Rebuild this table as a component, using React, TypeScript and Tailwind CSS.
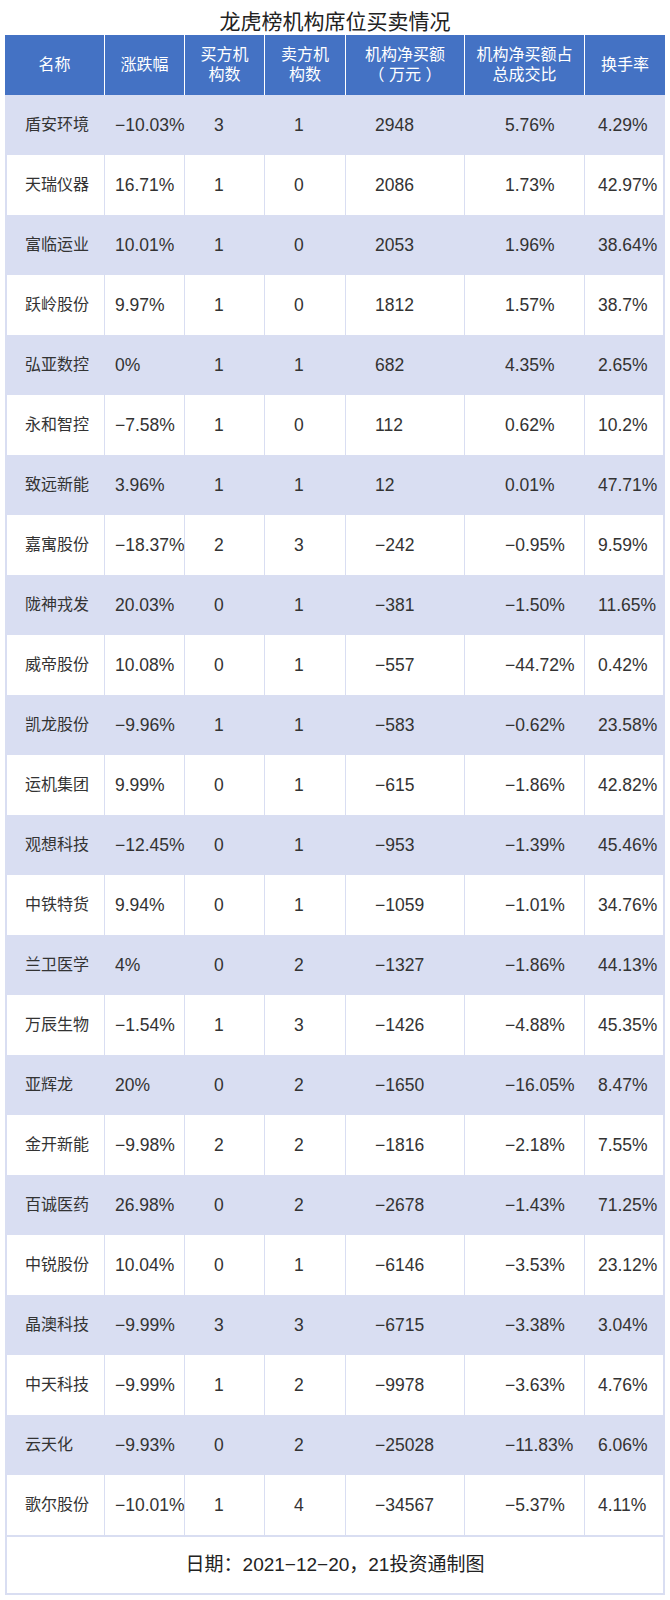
import React from 'react';

type Row = [string, string, string, string, string, string, string];

// 名称, 涨跌幅, 买方机构数, 卖方机构数, 机构净买额, 占比, 换手率
const rows: Row[] = [
  ['盾安环境', '−10.03%', '3', '1', '2948', '5.76%', '4.29%'],
  ['天瑞仪器', '16.71%', '1', '0', '2086', '1.73%', '42.97%'],
  ['富临运业', '10.01%', '1', '0', '2053', '1.96%', '38.64%'],
  ['跃岭股份', '9.97%', '1', '0', '1812', '1.57%', '38.7%'],
  ['弘亚数控', '0%', '1', '1', '682', '4.35%', '2.65%'],
  ['永和智控', '−7.58%', '1', '0', '112', '0.62%', '10.2%'],
  ['致远新能', '3.96%', '1', '1', '12', '0.01%', '47.71%'],
  ['嘉寓股份', '−18.37%', '2', '3', '−242', '−0.95%', '9.59%'],
  ['陇神戎发', '20.03%', '0', '1', '−381', '−1.50%', '11.65%'],
  ['威帝股份', '10.08%', '0', '1', '−557', '−44.72%', '0.42%'],
  ['凯龙股份', '−9.96%', '1', '1', '−583', '−0.62%', '23.58%'],
  ['运机集团', '9.99%', '0', '1', '−615', '−1.86%', '42.82%'],
  ['观想科技', '−12.45%', '0', '1', '−953', '−1.39%', '45.46%'],
  ['中铁特货', '9.94%', '0', '1', '−1059', '−1.01%', '34.76%'],
  ['兰卫医学', '4%', '0', '2', '−1327', '−1.86%', '44.13%'],
  ['万辰生物', '−1.54%', '1', '3', '−1426', '−4.88%', '45.35%'],
  ['亚辉龙', '20%', '0', '2', '−1650', '−16.05%', '8.47%'],
  ['金开新能', '−9.98%', '2', '2', '−1816', '−2.18%', '7.55%'],
  ['百诚医药', '26.98%', '0', '2', '−2678', '−1.43%', '71.25%'],
  ['中锐股份', '10.04%', '0', '1', '−6146', '−3.53%', '23.12%'],
  ['晶澳科技', '−9.99%', '3', '3', '−6715', '−3.38%', '3.04%'],
  ['中天科技', '−9.99%', '1', '2', '−9978', '−3.63%', '4.76%'],
  ['云天化', '−9.93%', '0', '2', '−25028', '−11.83%', '6.06%'],
  ['歌尔股份', '−10.01%', '1', '4', '−34567', '−5.37%', '4.11%'],
];

const headers = [
  ['名称'],
  ['涨跌幅'],
  ['买方机', '构数'],
  ['卖方机', '构数'],
  ['机构净买额', '（ 万元 ）'],
  ['机构净买额占', '总成交比'],
  ['换手率'],
];

// left padding of each body column
const pads = ['pl-[18px]', 'pl-[10px]', 'pl-[29px]', 'pl-[29px]', 'pl-[29px]', 'pl-[40px]', 'pl-[13px]'];

export default function App() {
  return (
    <div
      className="w-[670px] bg-white text-[#333]"
      style={{ fontFamily: '"Liberation Sans", "Noto Sans CJK SC", sans-serif' }}
    >
      {/* Title */}
      <div className="h-[35px] pt-[10px] text-center text-[21px] leading-[24px] text-[#222]">
        龙虎榜机构席位买卖情况
      </div>

      <div className="ml-[5px] w-[660px]">
        {/* Header */}
        <div className="grid h-[60px] grid-cols-[100px_80px_80px_81px_119px_120px_80px] bg-[#4472C4] text-[16px] leading-[20px] text-white">
          {headers.map((h, i) => (
            <div
              key={i}
              className={`flex flex-col items-center justify-center text-center ${i < 6 ? 'border-r border-white' : ''}`}
            >
              {h.map(l => (
                <span key={l} className="whitespace-pre">{l}</span>
              ))}
            </div>
          ))}
        </div>

        {/* Body */}
        {rows.map((r, ri) => (
          <div
            key={r[0]}
            className={`grid h-[60px] grid-cols-[98px_80px_80px_81px_119px_120px_78px] border-x-2 border-[#D9DEF2] ${ri % 2 === 0 ? 'bg-[#D9DEF2]' : 'bg-white'}`}
          >
            {r.map((c, ci) => (
              <div
                key={ci}
                className={`flex items-center whitespace-nowrap ${ci === 0 ? 'text-[16px]' : 'text-[17.5px]'} ${pads[ci]} ${ci < 6 ? 'border-r border-[#D9DEF2]' : ''}`}
              >
                {c}
              </div>
            ))}
          </div>
        ))}

        {/* Footer */}
        <div className="flex h-[60px] items-center justify-center border-x-2 border-t-2 border-b-2 border-[#D9DEF2] text-[19px] text-[#222]">
          日期：2021−12−20，21投资通制图
        </div>
      </div>
    </div>
  );
}
